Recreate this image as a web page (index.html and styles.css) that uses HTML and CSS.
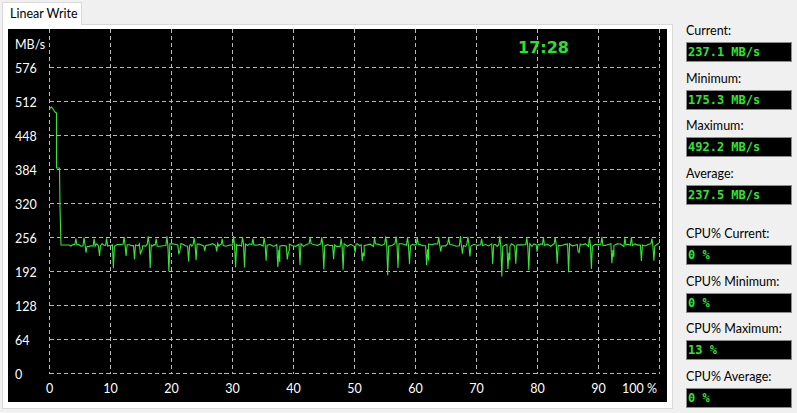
FILE: index.html
```html
<!DOCTYPE html>
<html lang="en">
<head>
<meta charset="utf-8">
<title>Linear Write</title>
<link rel="stylesheet" href="styles.css">
</head>
<body>
<div class="window">
  <div class="tabview">
    <div class="tabstrip">
      <div class="tab">Linear Write</div>
      <div class="tab-fill"></div>
    </div>
    <div class="panel">
      <svg class="chart" width="659" height="373" viewBox="0 0 659 373">
        <rect class="chart-bg" width="659" height="373"/>
        <path class="grid" d="M41.5 0V344.5M102.5 0V344.5M163.5 0V344.5M224.5 0V344.5M285.5 0V344.5M346.5 0V344.5M407.5 0V344.5M468.5 0V344.5M529.5 0V344.5M590.5 0V344.5M651.5 0V344.5
          M41.5 38.5H651.5M41.5 72.5H651.5M41.5 106.5H651.5M41.5 140.5H651.5M41.5 174.5H651.5M41.5 208.5H651.5M41.5 242.5H651.5M41.5 276.5H651.5M41.5 310.5H651.5M41.5 344.5H651.5"/>
        <g class="axis-y">
          <text x="7" y="15">MB/s</text>
          <text x="7" y="39">576</text>
          <text x="7" y="73">512</text>
          <text x="7" y="107">448</text>
          <text x="7" y="141">384</text>
          <text x="7" y="175">320</text>
          <text x="7" y="209">256</text>
          <text x="7" y="243">192</text>
          <text x="7" y="277">128</text>
          <text x="7" y="311">64</text>
          <text x="7" y="345">0</text>
        </g>
        <g class="axis-x">
          <text x="41.5" y="359">0</text>
          <text x="102.5" y="359">10</text>
          <text x="163.5" y="359">20</text>
          <text x="224.5" y="359">30</text>
          <text x="285.5" y="359">40</text>
          <text x="346.5" y="359">50</text>
          <text x="407.5" y="359">60</text>
          <text x="468.5" y="359">70</text>
          <text x="529.5" y="359">80</text>
          <text x="590.5" y="359">90</text>
          <text class="end" x="649" y="359">100 %</text>
        </g>
        <text class="clock" x="535.5" y="18">17:28</text>
        <polyline id="trace" class="trace" points=""/>
      </svg>
    </div>
  </div>
  <aside class="stats">
    <div class="stat-group">
      <div class="stat"><div class="stat-label">Current:</div><div class="stat-value">237.1 MB/s</div></div>
      <div class="stat"><div class="stat-label">Minimum:</div><div class="stat-value">175.3 MB/s</div></div>
      <div class="stat"><div class="stat-label">Maximum:</div><div class="stat-value">492.2 MB/s</div></div>
      <div class="stat"><div class="stat-label">Average:</div><div class="stat-value">237.5 MB/s</div></div>
    </div>
    <div class="stat-group">
      <div class="stat"><div class="stat-label">CPU% Current:</div><div class="stat-value">0 %</div></div>
      <div class="stat"><div class="stat-label">CPU% Minimum:</div><div class="stat-value">0 %</div></div>
      <div class="stat"><div class="stat-label">CPU% Maximum:</div><div class="stat-value">13 %</div></div>
      <div class="stat"><div class="stat-label">CPU% Average:</div><div class="stat-value">0 %</div></div>
    </div>
  </aside>
</div>
<script src="script.js"></script>
</body>
</html>
```

FILE: styles.css
```css
html, body {
  margin: 0;
  padding: 0;
}

body {
  background: #f0f0f0;
  font-family: Lato, "Liberation Sans", sans-serif;
  font-size: 12.5px;
  color: #000;
}

.window {
  display: flex;
  align-items: flex-start;
  padding: 2px 0 0 2px;
  height: 413px;
  box-sizing: border-box;
}

.tabview {
  display: flex;
  flex-direction: column;
  width: 671px;
}

.tabstrip {
  display: flex;
  height: 23px;
}

.tab {
  width: 80px;
  height: 23px;
  box-sizing: border-box;
  border: 1px solid #d9d9d9;
  border-bottom: none;
  background: #fff;
  padding-left: 7px;
  line-height: 21px;
  white-space: nowrap;
}

.tab-fill {
  flex: 1;
  border-bottom: 1px solid #d9d9d9;
}

.panel {
  background: #fff;
  border: 1px solid #d9d9d9;
  border-top: none;
  padding: 4px 5px 6px 5px;
}

.chart {
  display: block;
}

.chart-bg {
  fill: #000;
}

.grid {
  fill: none;
  stroke: #b8b8b8;
  stroke-width: 1;
  stroke-dasharray: 4 3;
  shape-rendering: crispEdges;
}

.axis-y text,
.axis-x text {
  fill: #fff;
  font-family: Lato, "Liberation Sans", sans-serif;
  font-size: 12.5px;
  dominant-baseline: central;
}

.axis-x text {
  text-anchor: middle;
}

.axis-x text.end {
  text-anchor: end;
}

.clock {
  fill: #2ee02e;
  font-family: "DejaVu Sans", Verdana, sans-serif;
  font-weight: bold;
  font-size: 16px;
  text-anchor: middle;
  dominant-baseline: central;
}

.trace {
  fill: none;
  stroke: #38e438;
  stroke-width: 1.1;
}

.stats {
  margin-left: 13px;
  padding-top: 21px;
  display: flex;
  flex-direction: column;
  gap: 20.9px;
}

.stat-group {
  display: flex;
  flex-direction: column;
  gap: 8.7px;
}

.stat-label {
  line-height: 16px;
  height: 16px;
  margin-bottom: 3px;
  white-space: nowrap;
}

.stat-value {
  width: 106px;
  height: 20px;
  box-sizing: border-box;
  border: 1px solid #8c8c8c;
  background: #000;
  color: #30e430;
  font-family: "DejaVu Sans Mono", "Liberation Mono", monospace;
  font-weight: bold;
  font-size: 12px;
  line-height: 18px;
  padding-left: 1px;
  white-space: nowrap;
}
```

FILE: script.js
```js
(function () {
  var seed = 20240517;
  function rnd() {
    seed = (seed * 16807) % 2147483647;
    return seed / 2147483647;
  }
  var base = 216;
  function jitter() {
    return base + (rnd() - 0.5) * 3;
  }
  var pts = [
    [41.5, 79.5], [43.5, 78], [45, 80], [47, 83], [48.5, 84],
    [48.5, 139], [51.5, 139], [52, 178], [53, base], [61, base]
  ];
  var x = 61;
  while (x < 646) {
    var step = 3 + rnd() * 7;
    pts.push([x + step * 0.33, jitter()]);
    pts.push([x + step * 0.66, jitter()]);
    x += step;
    var r = rnd();
    var depth = rnd() < 0.15 ? 238 + rnd() * 14 : 221 + rnd() * 20;
    if (r < 0.3) {
      pts.push([x, jitter()]);
      pts.push([x + 1, 207 + rnd() * 3]);
      pts.push([x + 2, jitter()]);
      pts.push([x + 3, depth]);
      pts.push([x + 4, jitter()]);
      x += 4;
    } else if (r < 0.75) {
      pts.push([x, jitter()]);
      pts.push([x + 1, depth]);
      if (rnd() < 0.3) {
        pts.push([x + 2, 220 + rnd() * 4]);
        pts.push([x + 3, depth - 4 - rnd() * 6]);
        x += 1;
      }
      pts.push([x + 2, jitter()]);
      x += 2;
    } else {
      pts.push([x, jitter()]);
      pts.push([x + 1, 207 + rnd() * 3]);
      pts.push([x + 2, jitter()]);
      x += 2;
    }
  }
  pts.push([651, base - 2]);
  document.getElementById('trace').setAttribute('points', pts.map(function (p) {
    return p[0].toFixed(1) + ',' + p[1].toFixed(1);
  }).join(' '));
})();
```
